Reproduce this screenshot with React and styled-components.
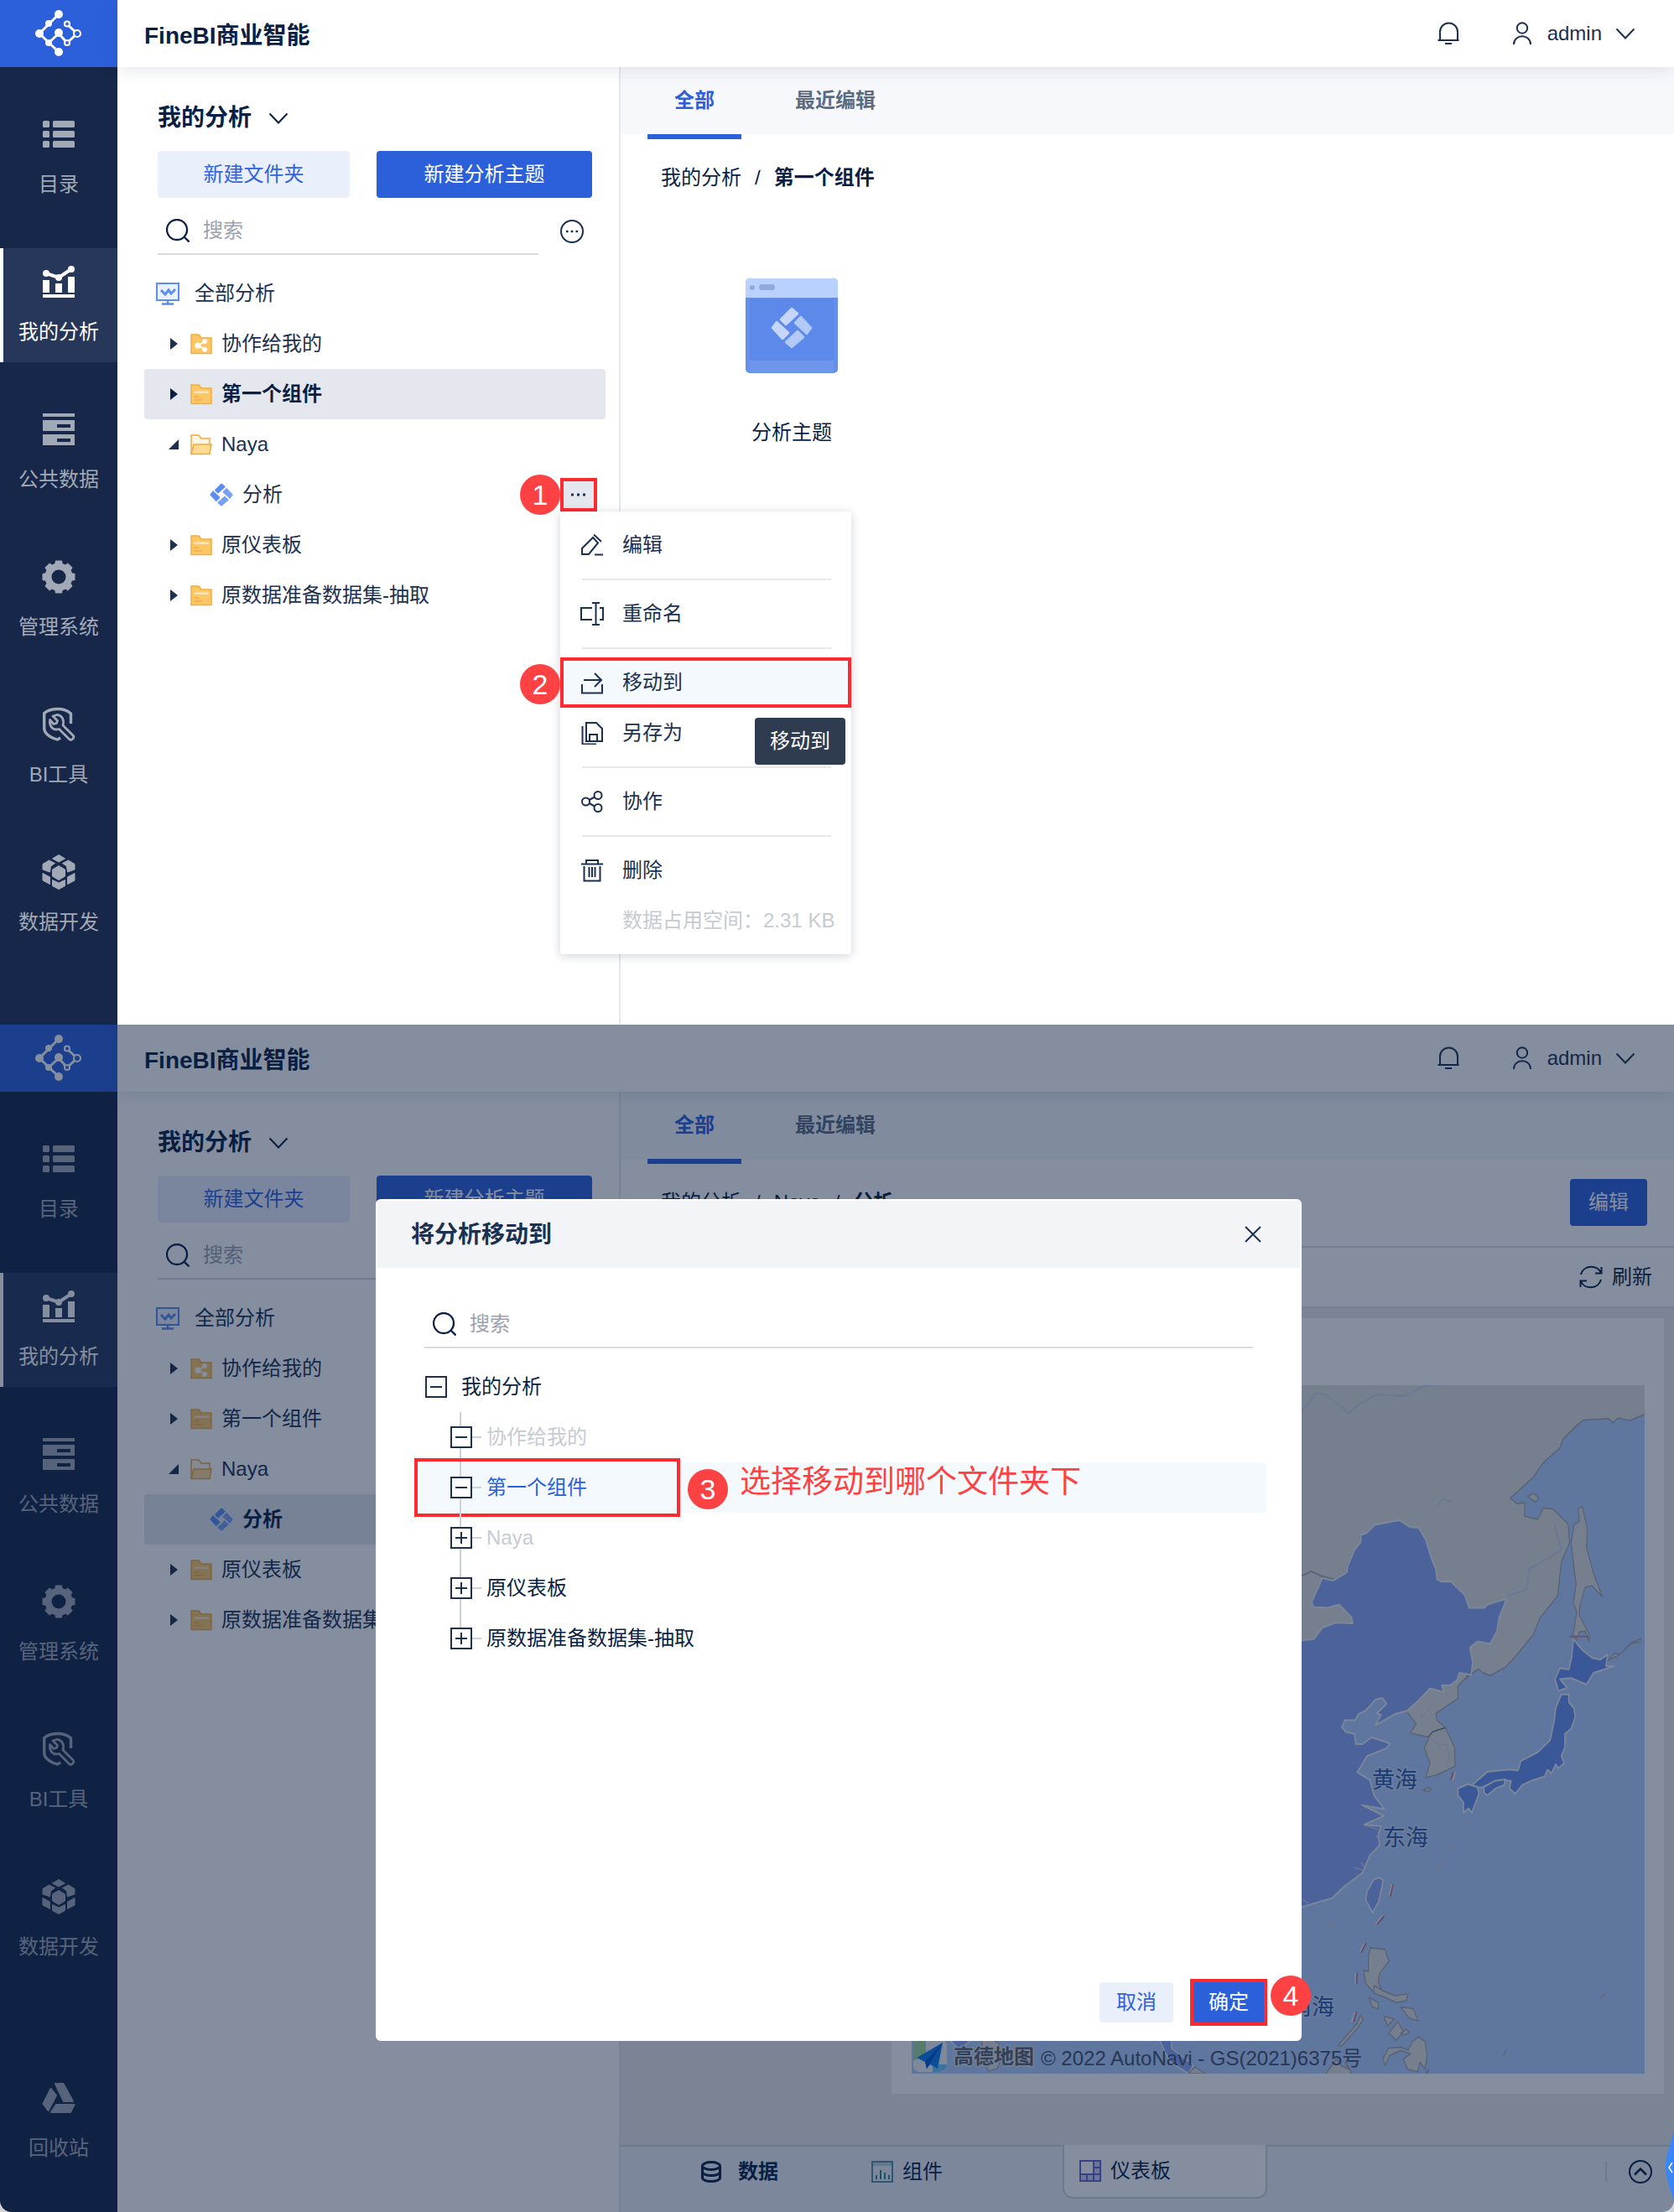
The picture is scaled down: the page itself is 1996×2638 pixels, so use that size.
import React from 'react';
import styled, { createGlobalStyle, css } from 'styled-components';

const GlobalStyle = createGlobalStyle`
    *, *::before, *::after {
        box-sizing: border-box;
    }
    body {
        margin: 0;
        background: #d3d3d3;
        color: #1c3050;
        font-family: 'Liberation Sans', 'Noto Sans CJK SC', sans-serif;
        font-size: 24px;
        line-height: 36px;
    }
    button, input {
        font: inherit;
        color: inherit;
        border: none;
        background: none;
        padding: 0;
        margin: 0;
    }
    a {
        color: inherit;
        text-decoration: none;
    }
    ul {
        list-style: none;
        margin: 0;
        padding: 0;
    }
    svg {
        display: block;
        flex-shrink: 0;
    }
`;

/* ---------- shell ---------- */

const Screen = styled.section`
    position: relative;
    display: flex;
    background: #fff;
    overflow: hidden;
    border-radius: ${({ $rounded }) => ($rounded ? '0 0 14px 14px' : '0')};
`;

const Rail = styled.nav`
    display: flex;
    flex-direction: column;
    width: 140px;
    flex-shrink: 0;
    background: #172749;
    padding-bottom: ${({ $end }) => $end}px;
`;

const LogoBox = styled.a`
    display: flex;
    align-items: center;
    justify-content: center;
    height: 80px;
    background: #2c60db;
    color: #fff;
`;

const RailList = styled.ul`
    display: flex;
    flex-direction: column;
    flex: 1;
    gap: 40px;
    padding-top: 40px;
`;

const RailItem = styled.li`
    margin-top: ${({ $last }) => ($last ? '64px' : '0')};
`;

const RailLink = styled.a`
    display: flex;
    flex-direction: column;
    align-items: center;
    gap: 22px;
    height: 136px;
    padding: 20px 4px 0 0;
    border-left: 4px solid ${({ $active }) => ($active ? '#fff' : 'transparent')};
    background: ${({ $active }) => ($active ? '#27375a' : 'transparent')};
    color: ${({ $active }) => ($active ? '#fff' : '#a2a9b6')};
`;

const Column = styled.div`
    display: flex;
    flex-direction: column;
    flex: 1;
    min-width: 0;
`;

const TopBar = styled.header`
    position: relative;
    z-index: 1;
    display: flex;
    align-items: center;
    height: 80px;
    padding: 0 46px 0 32px;
    background: #fff;
    box-shadow: 0 2px 20px rgba(20, 40, 80, 0.13);
`;

const Brand = styled.h1`
    margin: 0 auto 0 0;
    padding-top: 6px;
    font-size: 28px;
    line-height: 40px;
    font-weight: 700;
    color: #0a1f44;
`;

const IconButton = styled.button`
    display: flex;
    align-items: center;
    gap: ${({ $gap }) => $gap || 0}px;
    margin-right: ${({ $end }) => $end || 0}px;
    cursor: pointer;
`;

const Body = styled.div`
    display: flex;
    flex: 1;
`;

/* ---------- left panel ---------- */

const SidePanel = styled.aside`
    display: flex;
    flex-direction: column;
    width: 600px;
    flex-shrink: 0;
    padding: 40px 16px 40px 32px;
    border-right: 2px solid #e4e7ee;
`;

const PanelTitle = styled.button`
    display: flex;
    align-items: center;
    gap: 20px;
    height: 40px;
    margin-left: 16px;
    padding-top: 2px;
    font-size: 28px;
    font-weight: 700;
    color: #0a1f44;
`;

const ButtonRow = styled.div`
    display: grid;
    grid-template-columns: 229fr 257fr;
    gap: 32px;
    margin: 20px 16px 0;
`;

const Button = styled.button`
    height: ${({ $small }) => ($small ? 48 : 56)}px;
    padding: 0 ${({ $small }) => ($small ? 20 : 22)}px;
    border-radius: 4px;
    cursor: pointer;
    background: #e9effb;
    color: #3262dc;
    ${({ $primary }) => $primary && css`
        background: #2c60db;
        color: #fff;
    `}
`;

const SearchRow = styled.div`
    display: flex;
    align-items: center;
    gap: 26px;
    height: 80px;
    margin: 0 26px 0 16px;
`;

const SearchBox = styled.label`
    display: flex;
    align-items: center;
    gap: 16px;
    flex: 1;
    height: 56px;
    padding-left: 10px;
    border-bottom: 2px solid #d8dbe3;
    color: #0a1f44;
`;

const SearchInput = styled.input`
    flex: 1;
    min-width: 0;
    outline: none;
    &::placeholder {
        color: #9aa2b0;
        opacity: 1;
    }
`;

const TreeRow = styled.li`
    position: relative;
    display: flex;
    align-items: center;
    height: 60px;
    padding: 0 10px 0 ${({ $level }) => [14, 28, 78][$level]}px;
    border-radius: 4px;
    background: ${({ $selected }) => ($selected ? '#e5e7ee' : 'transparent')};
    font-weight: ${({ $selected }) => ($selected ? 700 : 400)};
    color: ${({ $selected }) => ($selected ? '#0a1f44' : '#1c3050')};
`;

const TreeList = styled.ul`
    margin-top: 4px;
`;

const TreeLabel = styled.a`
    display: flex;
    align-items: center;
    gap: ${({ $wide }) => ($wide ? 18 : 11)}px;
    white-space: nowrap;
`;

const Caret = styled.svg`
    margin-right: 13px;
`;

/* ---------- row menu ---------- */

const MoreWrap = styled.div`
    position: relative;
    z-index: 5;
    width: 44px;
    height: 40px;
    margin-left: auto;
    font-weight: 400;
`;

const MoreButton = styled.button`
    display: flex;
    align-items: center;
    justify-content: center;
    width: 44px;
    height: 40px;
    border: 4px solid #fd2a2f;
    background: #e5e7ee;
`;

const Badge = styled.span`
    position: absolute;
    z-index: 6;
    left: ${({ $left }) => $left}px;
    top: ${({ $top }) => $top}px;
    width: 48px;
    height: 48px;
    border-radius: 50%;
    background: #fe4143;
    color: #fff;
    font-size: 34px;
    font-weight: 400;
    line-height: 48px;
    text-align: center;
`;

const Menu = styled.ul`
    position: absolute;
    top: 100%;
    left: 0;
    width: 347px;
    padding: 10px 0;
    background: #fff;
    border-radius: 4px;
    box-shadow: 0 2px 12px rgba(10, 31, 68, 0.2);
`;

const MenuItem = styled.li`
    position: relative;
`;

const MenuButton = styled.button`
    display: flex;
    align-items: center;
    gap: 22px;
    width: 100%;
    height: 60px;
    padding-left: ${({ $marked }) => ($marked ? 20 : 24)}px;
    border: ${({ $marked }) => ($marked ? '4px solid #fd2a2f' : 'none')};
    background: ${({ $marked }) => ($marked ? '#f4f9fe' : 'transparent')};
    cursor: pointer;
`;

const MenuLine = styled.li`
    height: 2px;
    margin: 10px 24px 10px 26px;
    background: #e5e8f0;
`;

const MenuNote = styled.li`
    height: 60px;
    padding-left: 74px;
    line-height: 60px;
    white-space: nowrap;
    color: #c6cbd3;
`;

const Tooltip = styled.span`
    position: absolute;
    z-index: 3;
    right: 7px;
    top: 72px;
    padding: 10px 18px;
    border-radius: 4px;
    background: #2f3c50;
    color: #fff;
`;

/* ---------- main pane ---------- */

const Main = styled.main`
    display: flex;
    flex-direction: column;
    flex: 1;
    min-width: 0;
`;

const Tabs = styled.div`
    display: flex;
    gap: 32px;
    height: 80px;
    padding-left: 32px;
    background: #f7f8fc;
`;

const Tab = styled.button`
    height: 86px;
    padding: 0 32px;
    border-bottom: 6px solid ${({ $active }) => ($active ? '#2c60db' : 'transparent')};
    color: ${({ $active }) => ($active ? '#2c60db' : '#5c6b80')};
    font-weight: 700;
`;

const CrumbBar = styled.div`
    display: flex;
    align-items: center;
    justify-content: space-between;
    height: ${({ $line }) => ($line ? 106 : 104)}px;
    padding: 0 32px 0 48px;
    border-bottom: ${({ $line }) => ($line ? '2px solid #dcdfe6' : 'none')};
    color: #0a1f44;
`;

const Crumbs = styled.div`
    display: flex;
    gap: 16px;
`;

const FileCard = styled.a`
    display: flex;
    flex-direction: column;
    align-items: center;
    gap: 52px;
    width: 208px;
    margin: 68px 0 0 100px;
    color: #0a1f44;
`;

const RefreshBar = styled.div`
    display: flex;
    justify-content: flex-end;
    height: 72px;
    padding-right: 26px;
    border-bottom: 2px solid #dcdfe6;
    color: #0a1f44;
`;

const Canvas = styled.div`
    flex: 1;
    padding: 12px 12px 61px;
    background: #ebebea;
`;

const MapCard = styled.div`
    width: 921px;
    max-width: 100%;
    margin-left: auto;
    padding: 80px 23px 24px 24px;
    background: #fff;
`;

const MapSvg = styled.svg`
    width: 100%;
    height: auto;
`;

const SheetBar = styled.div`
    display: flex;
    align-items: flex-start;
    height: 80px;
    border-top: 2px solid #cfd4de;
    background: #eef0f6;
    color: #0a1f44;
`;

const SheetTab = styled.button`
    display: flex;
    align-items: center;
    gap: 11px;
    width: 246px;
    height: 60px;
    padding-left: 18px;
    ${({ $first }) => $first && css`
        width: 281px;
        gap: 20px;
        padding-left: 96px;
        font-weight: 700;
    `}
    ${({ $active }) => $active && css`
        width: 244px;
        height: 64px;
        margin-top: -2px;
        border: 2px solid #cfd4de;
        border-top: none;
        border-radius: 0 0 12px 12px;
        background: #fff;
    `}
`;

const SheetEnd = styled.div`
    display: flex;
    align-items: center;
    height: 24px;
    margin: 18px 26px 0 auto;
    padding-left: 26px;
    border-left: 2px solid #cfd4de;
`;

/* ---------- dialog ---------- */

const Shade = styled.div`
    position: absolute;
    inset: 0;
    z-index: 10;
    display: flex;
    align-items: center;
    justify-content: center;
    padding: 4px 0 0 4px;
    background: rgba(10, 30, 64, 0.5);
`;

const Dialog = styled.div`
    display: flex;
    flex-direction: column;
    width: 1104px;
    min-height: 1004px;
    border: 2px solid #fff;
    border-radius: 6px;
    background: #fff;
`;

const DialogHead = styled.div`
    display: flex;
    align-items: center;
    justify-content: space-between;
    height: 80px;
    padding: 0 46px 0 40px;
    background: #f2f4f8;
`;

const DialogTitle = styled.h2`
    margin: 0;
    padding-top: 2px;
    font-size: 28px;
    font-weight: 700;
`;

const DialogSearch = styled.div`
    display: flex;
    margin: 40px 56px 16px;
`;

const MoveTree = styled.ul`
    flex: 1;
    margin: 0 40px 0 44px;
`;

const MoveRow = styled.li`
    position: relative;
    display: flex;
    align-items: center;
    height: 60px;
    padding-left: ${({ $root }) => ($root ? 13 : 43)}px;
    border-radius: 4px;
    background: ${({ $picked }) => ($picked ? '#f4f9fe' : 'transparent')};
    color: ${({ $picked, $muted }) => ($picked ? '#2c60db' : $muted ? '#c6cbd3' : '#0a1f44')};
    ${({ $root }) => !$root && css`
        &::before {
            content: '';
            position: absolute;
            left: 54px;
            top: 0;
            height: 60px;
            border-left: 2px solid #cdd1da;
        }
        &:last-child::before {
            height: 30px;
        }
    `}
`;

const Toggle = styled.button`
    position: relative;
    display: flex;
`;

const Hook = styled.span`
    width: ${({ $root }) => ($root ? 17 : 11)}px;
    height: 2px;
    margin-right: ${({ $root }) => ($root ? 0 : 6)}px;
    background: ${({ $root }) => ($root ? 'transparent' : '#cdd1da')};
`;

const Frame = styled.span`
    position: absolute;
    left: 0;
    top: -5px;
    width: 317px;
    height: 70px;
    border: 4px solid #fd2a2f;
    pointer-events: none;
`;

const Remark = styled.span`
    position: absolute;
    left: 388px;
    top: 0;
    font-size: 37px;
    line-height: 48px;
    color: #fe4143;
    white-space: nowrap;
    text-shadow: 0 0 4px #fff, 0 0 4px #fff;
`;

const DialogFoot = styled.div`
    display: flex;
    align-items: center;
    justify-content: flex-end;
    gap: 20px;
    padding: 0 39px 16px;
`;

const ConfirmWrap = styled.div`
    position: relative;
    display: flex;
    border: 4px solid #fd2a2f;
`;

const ConfirmButton = styled(Button)`
    padding: 0 18px;
    border-radius: 0;
`;

const SideHandle = styled.button`
    position: absolute;
    z-index: 11;
    right: 0;
    bottom: 10px;
    width: 10px;
    height: 90px;
`;

/* ---------- icons ---------- */

const Logo = () => (
    <svg width="60" height="60" viewBox="40 10 60 60" fill="currentColor" stroke="currentColor">
        <g fill="none" strokeWidth="3">
            <path d="M70 17 47 40l23 22M70 40 58 51M70 40l10 11M80 29l12 11-12 11" />
        </g>
        <g stroke="none">
            <circle cx="70" cy="17" r="5" />
            <circle cx="47" cy="40" r="5" />
            <circle cx="70" cy="62" r="5" />
            <circle cx="70" cy="39" r="5" />
            <circle cx="58" cy="28" r="4" />
            <circle cx="58" cy="51" r="4" />
        </g>
        <g fill="#2c60db" strokeWidth="2.2">
            <circle cx="80" cy="28.5" r="3" />
            <circle cx="92" cy="40" r="4" />
            <circle cx="80" cy="51" r="3" />
        </g>
    </svg>
);

const railIcons = {
    list: (
        <g>
            {[4, 16, 28].map((y) => (
                <g key={y}>
                    <rect x="1" y={y} width="8" height="8" rx="1.5" />
                    <rect x="13" y={y} width="26" height="8" rx="1.5" />
                </g>
            ))}
        </g>
    ),
    chart: (
        <g>
            <path d="M1 18h8v15H1zM16 22h8v11h-8zM31 14h8v19h-8zM1 35h38v4H1z" />
            <path d="M5 10l15 5L35 5" fill="none" stroke="currentColor" strokeWidth="4" />
            <circle cx="5" cy="10" r="4" />
            <circle cx="20" cy="15" r="4" />
            <circle cx="35" cy="5" r="4" />
        </g>
    ),
    data: <path fillRule="evenodd" d="M1 1h38v4H1zM1 9h38v13H1zM18 14v4h16v-4zM1 26h38v13H1zM18 31v4h16v-4z" />,
    gear: (
        <g>
            <circle cx="20" cy="20" r="12.5" fill="none" stroke="currentColor" strokeWidth="8" />
            {[0, 45, 90, 135, 180, 225, 270, 315].map((a) => (
                <path key={a} d="M15 6l1-5.500h8l1 5.500z" transform={`rotate(${a} 20 20)`} />
            ))}
        </g>
    ),
    tool: (
        <g fill="none" stroke="currentColor" strokeWidth="3.4" strokeLinejoin="round">
            <path d="M34.500 19V7C30 3 25 1.500 19 1.500S7 3 2.700 6.500V24c0 6 6 11 15.500 14l4-2" />
            <path d="M13 10l5.500 5.500-1 3-3.500 1-4.500-5c-1 6 2 11 7 11.500 2 0 3 0 4-.6L33 38c2 1.500 6-2 4.500-4.500L25 21c2-6-1-12-7-12.500z" strokeWidth="2.800" />
        </g>
    ),
    cube: (
        <g stroke="currentColor" strokeWidth="1" strokeLinejoin="round">
            <path d="M20-.5l7.500 4.500-7.500 4-7.500-4zM20 12.500l7.500 4.500v8l-7.500 4.500-7.500-4.500v-8zM20 33l7.500-3.500v7l-7.500 4-7.500-4v-7z" />
            <path d="M1 10.500l7.500-4.500 7 3.500-5 3.500-1 7-8.500-3zM1 21.500l8.500 4.500v8.500l-8.500-4.500zM39 10.500l-7.500-4.500-7 3.500 5 3.500 1 7 8.500-3zM39 21.500l-8.500 4.500v8.500l8.500-4.500z" />
        </g>
    ),
    recycle: (
        <path
            stroke="currentColor"
            strokeWidth="2"
            strokeLinejoin="round"
            d="M16 3h9.500l11.500 21H26zM10.500 9l6.500 8L7.500 35 1.500 27zM17 28h21.500L34 37H11z"
        />
    ),
};

const RailIcon = ({ name }) => (
    <svg width="40" height="40" viewBox="0 0 40 40" fill="currentColor" overflow="visible">
        {railIcons[name]}
    </svg>
);

// Thin outline icons share one wrapper
const Line = ({ size = 28, d, width = 2, children }) => (
    <svg width={size} height={size} viewBox="0 0 28 28" fill="none" stroke="currentColor" strokeWidth={width}>
        {d && <path d={d} />}
        {children}
    </svg>
);

const Chevron = () => (
    <svg width="24" height="24" viewBox="0 0 24 24" fill="none" stroke="currentColor" strokeWidth="2">
        <path d="M1.500 6.500L12 17.500 22.500 6.500" />
    </svg>
);

const SearchIcon = () => (
    <Line>
        <circle cx="13" cy="13" r="12" strokeWidth="2.300" />
        <path d="M21.500 21.500l6 6" strokeWidth="2.300" />
    </Line>
);

const folderColors = { fill: '#fdc766', stroke: '#f0ae45' };

const Folder = ({ kind }) => (
    <svg width="26" height="26" viewBox="0 0 26 26" strokeWidth="1.500">
        {kind === 'open' ? (
            <g stroke="#efa93c">
                <path d="M1 24V2h9l3 4h10v18z" fill="#fff6e2" />
                <path d="M4 13h21l-2 11.500H1z" fill="#ffdb94" />
            </g>
        ) : (
            <path d="M1 24.500V2h9l3 4h12v18.500z" {...folderColors} />
        )}
        {kind === 'plain' && (
            <g fill="none">
                <path d="M4 12c0-2 1-2.500 3-2.500h12c2 0 3 .5 3 2.500z" fill="#ffe7b5" />
                <path d="M4 16h6M4 20h10" stroke="#f0ae45" />
            </g>
        )}
        {kind === 'share' && (
            <g fill="#fff" stroke="#fff">
                <path d="M17 10.500L9 15l8 4.500" fill="none" />
                <circle cx="17" cy="10" r="2.200" />
                <circle cx="9" cy="15" r="2.800" />
                <circle cx="17" cy="20" r="2.200" />
            </g>
        )}
    </svg>
);

const Pinwheel = ({ size, from, to }) => (
    <svg width={size} height={size} viewBox="0 0 50 50" strokeWidth="2.500" strokeLinejoin="round">
        <path d="M25 2l7 6-14 13-6-6zM7 18l14 13-7 7L2 25z" fill={from} stroke={from} />
        <path d="M36 12l12 13-5 7-14-13zM32 29l7 7-14 12-7-6z" fill={to} stroke={to} />
    </svg>
);

const Monitor = () => (
    <svg width="28" height="28" viewBox="0 0 28 28" fill="none" stroke="#5c8df0" strokeWidth="2">
        <path d="M1 2h26v20H1z" fill="#eaf1fe" />
        <path d="M6 10l5 5 4-5 3 4 5-5" strokeWidth="3" />
        <path d="M14 22v4M7 26.500h14" strokeWidth="2.500" />
    </svg>
);

const menuIcons = {
    edit: <Line d="M2 25V18L15 5l6 6.500L10 25zM16 1.500l9 8.500M17 25.500h10" />,
    rename: <Line d="M14 7H1v14h13M23 7h4v14h-4M18.500 1v26M14 1h9M14 27h9" />,
    move: <Line d="M2 16v10.500h24V16M4 11h21M17 3l8 8-8 8" />,
    saveAs: <Line d="M7 2h12l7 7v15H7zM11 24v-8h9v8M2.500 6v21.500H19" />,
    share: (
        <Line>
            <circle cx="6.500" cy="14" r="4.500" />
            <circle cx="21" cy="6.500" r="4.500" />
            <circle cx="21" cy="21.500" r="4.500" />
            <path d="M10.500 12L17 8.500M10.500 16l6.500 3.500" />
        </Line>
    ),
    trash: <Line d="M1 6.500h26M7 6V2h14v4M4.500 9v17.500h19V9M10.500 10v12M14 10v12M17.500 10v12" />,
};

const ThemeFile = () => (
    <svg width="110" height="114" viewBox="0 0 110 114">
        <rect width="110" height="113" rx="5" fill="#6490ec" />
        <path d="M5 24h100v74H5z" fill="#5d8aea" />
        <path d="M5 98h100v14H5z" fill="#6e97ec" />
        <path d="M0 23V5a5 5 0 0 1 5-5h100a5 5 0 0 1 5 5v18z" fill="#b9d1fe" />
        <circle cx="8" cy="11" r="3" fill="#8faadf" />
        <rect x="16" y="7" width="19" height="7" rx="3.500" fill="#8faadf" />
        <g transform="translate(30 34)" strokeWidth="2.500" strokeLinejoin="round">
            <path d="M25 2l7 6-14 13-6-6zM7 18l14 13-7 7L2 25z" fill="#c6d6fb" stroke="#c6d6fb" />
            <path d="M36 12l12 13-5 7-14-13zM32 29l7 7-14 12-7-6z" fill="#b3c9f8" stroke="#b3c9f8" />
        </g>
    </svg>
);

/* ---------- data ---------- */

const railItems = [
    { label: '目录', icon: 'list' },
    { label: '我的分析', icon: 'chart' },
    { label: '公共数据', icon: 'data' },
    { label: '管理系统', icon: 'gear' },
    { label: 'BI工具', icon: 'tool' },
    { label: '数据开发', icon: 'cube' },
];

const treeItems = [
    { label: '协作给我的', kind: 'share' },
    { label: '第一个组件', kind: 'plain' },
    { label: 'Naya', kind: 'open' },
    { label: '分析', kind: 'theme' },
    { label: '原仪表板', kind: 'plain' },
    { label: '原数据准备数据集-抽取', kind: 'plain' },
];

const moveItems = [
    { label: '我的分析', root: true, open: true },
    { label: '协作给我的', open: true, muted: true },
    { label: '第一个组件', open: true, picked: true },
    { label: 'Naya', muted: true },
    { label: '原仪表板' },
    { label: '原数据准备数据集-抽取' },
];

/* ---------- parts ---------- */

const SideNav = ({ items, end }) => (
    <Rail $end={end}>
        <LogoBox href="#" aria-label="FineBI">
            <Logo />
        </LogoBox>
        <RailList>
            {items.map((item) => (
                <RailItem key={item.label} $last={item.icon === 'recycle'}>
                    <RailLink href="#" $active={item.icon === 'chart'}>
                        <RailIcon name={item.icon} />
                        {item.label}
                    </RailLink>
                </RailItem>
            ))}
        </RailList>
    </Rail>
);

const Header = () => (
    <TopBar>
        <Brand>FineBI商业智能</Brand>
        <IconButton aria-label="消息" $end={60}>
            <Line d="M4 22V12a10 10 0 0 1 21 0v10M1.500 22h25M10 26h8" />
        </IconButton>
        <IconButton $gap={16}>
            <Line>
                <circle cx="14" cy="7.500" r="6.200" />
                <path d="M4 27c0-13 20-13 20 0" />
            </Line>
            admin
            <Chevron />
        </IconButton>
    </TopBar>
);

const RowMenu = () => (
    <MoreWrap>
        <Badge $left={-48} $top={-4}>1</Badge>
        <MoreButton aria-label="更多">
            <svg width="20" height="4" viewBox="0 0 20 4" fill="#1c3050">
                <path d="M1 .5h3v3H1zM8 .5h3v3H8zM15 .5h3v3h-3z" />
            </svg>
        </MoreButton>
        <Menu>
            <MenuItem><MenuButton>{menuIcons.edit}编辑</MenuButton></MenuItem>
            <MenuLine />
            <MenuItem><MenuButton>{menuIcons.rename}重命名</MenuButton></MenuItem>
            <MenuLine />
            <MenuItem>
                <Badge $left={-48} $top={8}>2</Badge>
                <MenuButton $marked>{menuIcons.move}移动到</MenuButton>
                <Tooltip>移动到</Tooltip>
            </MenuItem>
            <MenuItem><MenuButton>{menuIcons.saveAs}另存为</MenuButton></MenuItem>
            <MenuLine />
            <MenuItem><MenuButton>{menuIcons.share}协作</MenuButton></MenuItem>
            <MenuLine />
            <MenuItem><MenuButton>{menuIcons.trash}删除</MenuButton></MenuItem>
            <MenuNote>数据占用空间：2.31 KB</MenuNote>
        </Menu>
    </MoreWrap>
);

const Search = ({ id }) => (
    <SearchBox htmlFor={id}>
        <SearchIcon />
        <SearchInput id={id} type="text" placeholder="搜索" aria-label="搜索" />
    </SearchBox>
);

const Explorer = ({ id, selected, menu }) => (
    <SidePanel>
        <PanelTitle>
            我的分析
            <Chevron />
        </PanelTitle>
        <ButtonRow>
            <Button>新建文件夹</Button>
            <Button $primary>新建分析主题</Button>
        </ButtonRow>
        <SearchRow>
            <Search id={`${id}-search`} />
            <IconButton aria-label="更多操作">
                <Line>
                    <circle cx="14" cy="14" r="13" />
                    <path d="M7 14h2.500M12.700 14h2.600M18.500 14H21" strokeWidth="2.500" />
                </Line>
            </IconButton>
        </SearchRow>
        <TreeList>
            <TreeRow $level={0}>
                <TreeLabel href="#" $wide>
                    <Monitor />
                    全部分析
                </TreeLabel>
            </TreeRow>
            {treeItems.map(({ label, kind }) => (
                <TreeRow key={label} $level={kind === 'theme' ? 2 : 1} $selected={label === selected}>
                    {kind !== 'theme' && (
                        <Caret width="14" height="14" viewBox="0 0 14 14" fill="currentColor">
                            <path d={kind === 'open' ? 'M13 1v12H1z' : 'M3 0l9 7-9 7z'} />
                        </Caret>
                    )}
                    <TreeLabel href="#">
                        {kind === 'theme' ? <Pinwheel size={28} from="#5c8df2" to="#7aa0f5" /> : <Folder kind={kind} />}
                        {label}
                    </TreeLabel>
                    {menu && kind === 'theme' && <RowMenu />}
                </TreeRow>
            ))}
        </TreeList>
    </SidePanel>
);

const MainTabs = () => (
    <Tabs>
        <Tab $active>全部</Tab>
        <Tab>最近编辑</Tab>
    </Tabs>
);

const coast = '#c5cad3';
const land = '#e2e0dc';

const ChinaMap = () => (
    <MapSvg viewBox="1087 1652 874 821" role="img" aria-label="地图">
        <rect x="1087" y="1652" width="874" height="821" fill="#b4ceff" />
        <g transform="translate(1500 1880) scale(.33333 .40816)" strokeLinejoin="round">
            <g fill={land} stroke="#a9a9ae" strokeWidth="4">
                <path d="M-1260-580H1400V-477l-17 3-53 19-42-8-18 14-15-12-90 4-25 16-50 41-10 25-60 43-35 42-83 62 23 15 30-2-2 39 47 9 22-33 33 3 55 44 5 54-30 57-13 99-62 63-25 50-65 65-35 30-55 25-30-10-10-10-45 25-30 25v37l-78 43 3 20 30 22 33 58 2 55-65 25-40 8 15-43-20-45 17-30-67-12 20-28-33-35-132-95H-1260z" />
                <path d="M965-232l20-12 20 15-12 12z" />
                <path d="M1160-203l18 63-3 55 25 76 32 69-37-33-25 5-20 58v25l20 30 17 30-4 15-13-30-20 2-13 28-10-20 13-65-12-30 10-50-18-121 10-55 20-11-5-37z" />
                <path d="M402 1085l53 5 13 35-33 35-5 25 15 30-35-3-25-22-7-40 17 5v-45z" />
                <path d="M415 1195l30 15 45 15 45-5-5 20-35 5-40-15-40-12zM397 1230l33 15v20l-22-8zM450 1285l38 8-25 20zM468 1335l32-35 20 30-25 25zM510 1258l45 5 18 36-33-9zM510 1335l20-12 12 10-22 8z" />
                <path d="M575 1345l23 15 7 40-7 40-18-20-10 28-35-8-15-30 25-15-35-10-40 15-15 30-8-20 20-32 45-2 25 8 15-24z" />
                <path d="M285 1372l70-66 12-25 8 15-20 25-55 50zM240 1456l40-45 20 20 30 10 5 15zM590 624l20-8 10 6-15 6z" />
                <path d="M1250 247l25-22 20 2 40-33 35-12-3 8-35 8-42 32z" />
                <path d="M876 1400l12-16-6 14zM1222 1232l18-12-6 10z" strokeWidth="2" />
            </g>
            <g fill="none" stroke="#c9d2e8" strokeWidth="5">
                <path d="M156-481l49-53h30l50 30 40 27 40-28 60-26 100 4 75-31 65-3" />
                <path d="M890 58l70-20 10-60 55-25 60-30-25-75M640-205l20-20 30 5" />
                <path d="M620 380l-40 35M620 475l30 20 25-5 10 40-10 20" strokeWidth="3" />
            </g>
            <path d="M610 468l15-14 45-12" fill="none" stroke="#7d8086" strokeWidth="4" />
            <path d="M140 5l50-20 40 15 40 8" fill="none" stroke="#b0a8ac" strokeWidth="5" />
            <g fill="#8ca8f4" stroke="#eef0f4" strokeWidth="5">
                <path d="M388-126l30-25 87-13 40 20 30 2 25 35 18 49 19 40 3 26 15 7h35l50 40 15 37h53l14-10 68-17-28 55-7 40-25 37-45-7-27 18 10 42-6 38-42-6-8 20-24 16h-31l8 20-50-11-40 35-43 31-42 9-70 33 20-30-15-5 35-28-15-17-25 5-35 32-25 10-12 18h-38l-10 20 15 15 30 5 5 30h25l30-20 67 18-12 14-70 23-35 47 45 23 15 45 37 40-80-12 78 32-70 25 60 5-10 25 5 30-35 30-25 50-65 40-45 35-105 25-300 30V212h260l35-25 45-4 30-33 50-15 58 2-3-17-45-38-40 10-50-2-8-15 38-70 40 7 48-24 2-16 25-49 23-24v-20z" />
                <path d="M435 880l13 8-16 62-22 32-25-37 5-25 25-35z" />
            </g>
            <g fill="none" stroke="#e0e3ea" strokeWidth="2.500">
                <path d="M430 740l-50-14M452 700l-60-32M435 770l-15-14M378 860l-32-10M370 835l12 20M310 905l15 8M180 955l-20-12" />
            </g>
            <g fill="#6a92f0" stroke="#eef0f4" strokeWidth="5">
                <path d="M1128 183l32 32 35 23 30 5 25-15-5 34 30 0-75 20-25 34-55-19-40 3 25 25-30 10-13-35 18-32 32 4 10-37z" />
                <path d="M1085 345h27v23l18 17 5 25-15 35-22 15v40l-13 25 10 20-20 16-10-12-15 26-15-10-10 20-50 13-30 12-25 25-20-15 5-22-35-3-70 22h-45l65-46 80-7 30 3 10-28 60-25 45-35 15-60 5-35z" />
                <path d="M808 615l37-17 40-5-5 17-30 10-30 20-12-8zM715 620l35-13 35 8 5 20-25 55-12-12-18 12v-30l-20-20z" />
            </g>
            <g fill={coast}>
                <path d="M1092 175l18 22-12-2zM1005 455l12-6-2 14-12 6zM955 490l20-10-12 16zM830 520l10 2-6 10zM685 800l32-25-10 15-20 14zM640 857l15-25 12-4-12 20zM505 908l25-2-10 6zM560 893l10 4-8 2zM245 1008l35 12-15 2zM735 720l25-10-15 14zM500 865l10-5-6 8zM190 1305l25-15-12 14zM155 1395l45-22-15 24zM230 1330l20-10-10 14zM675 645l30-20-15 20z" />
            </g>
            <g stroke="#f3f3f6" strokeWidth="5">
                <path d="M479 900l-10 35M446 990l-25 26M381 1072l-16 26M349 1158v32M347 1273l-14 30M706 572l-10 24" />
            </g>
            <g stroke="#d25a68" strokeWidth="4">
                <path d="M483 900l-10 36M451 992l-25 25M386 1072l-17 27M354 1158l-1 33M352 1273l-9 28M698 572l-8 22" />
            </g>
            <path d="M1115 176h68M745 300l5-12M312 1418l16 24M600 1453l12-11" stroke="#c58c9c" strokeWidth="5" />
        </g>
        <g strokeWidth="1.500">
            <path d="M1171 2425l20 12 3 18-5 12-10 3-8-14z" fill={land} stroke="#a9a9ae" />
            <path d="M1379 2425h18v18l26 20-6 10-22-14zM1130 2430l13 14 14-10z" fill="#8ca8f4" stroke="#eef0f4" />
            <path d="M1417 2473l8-8 12 8z" fill={land} stroke="#a9a9ae" />
        </g>
        <g fontSize="27" fill="#2c5aa8" stroke="#cfdcf6" strokeWidth="3" paintOrder="stroke">
            <text x="1636" y="2132">黄海</text>
            <text x="1649" y="2201">东海</text>
            <text x="1537" y="2403">南海</text>
        </g>
        <g>
            <rect x="1089" y="2432" width="40" height="39" rx="8" fill="#f2f5f6" />
            <path d="M1089 2440a8 8 0 0 1 8-8h7v18l-15 8z" fill="#a5db9a" />
            <path d="M1112 2471v-9h17a9 9 0 0 1-9 9z" fill="#72c8f2" />
            <path d="M1124 2436l-31 18 10 5 2 8 4-5 9 5z" fill="#0a7cf0" />
            <path d="M1124 2436l-21 23 2 8z" fill="#0a56c8" />
        </g>
        <text x="1137" y="2461" fontSize="24" fontWeight="700" fill="#5a6270" stroke="#dfe3ea" strokeWidth="3" paintOrder="stroke">
            高德地图
        </text>
        <text x="1241" y="2463" fontSize="24" fill="#44506a">© 2022 AutoNavi - GS(2021)6375号</text>
    </MapSvg>
);

const MoveDialog = () => (
    <Shade>
        <Dialog role="dialog" aria-label="将分析移动到">
            <DialogHead>
                <DialogTitle>将分析移动到</DialogTitle>
                <IconButton aria-label="关闭">
                    <svg width="20" height="20" viewBox="0 0 20 20" fill="none" stroke="currentColor" strokeWidth="2">
                        <path d="M1 1l18 18M19 1L1 19" />
                    </svg>
                </IconButton>
            </DialogHead>
            <DialogSearch>
                <Search id="move-search-target" />
            </DialogSearch>
            <MoveTree>
                {moveItems.map(({ label, root, open, muted, picked }) => (
                    <MoveRow key={label} $root={root} $muted={muted} $picked={picked}>
                        <Toggle aria-label={open ? '收起' : '展开'}>
                            <svg width="26" height="26" viewBox="0 0 26 26" fill="none" stroke="#1c3050" strokeWidth="2">
                                <path d="M1 1h24v24H1z" fill="#fff" />
                                <path d={open ? 'M6 13h14' : 'M6 13h14M13 6v14'} />
                            </svg>
                        </Toggle>
                        <Hook $root={root} />
                        {label}
                        {picked && (
                            <>
                                <Frame />
                                <Badge $left={326} $top={8}>3</Badge>
                                <Remark>选择移动到哪个文件夹下</Remark>
                            </>
                        )}
                    </MoveRow>
                ))}
            </MoveTree>
            <DialogFoot>
                <Button $small>取消</Button>
                <ConfirmWrap>
                    <ConfirmButton $small $primary>确定</ConfirmButton>
                    <Badge $left={92} $top={-8}>4</Badge>
                </ConfirmWrap>
            </DialogFoot>
        </Dialog>
    </Shade>
);

const FolderScreen = () => (
    <Screen>
        <SideNav items={railItems} end={86} />
        <Column>
            <Header />
            <Body>
                <Explorer id="folder" selected="第一个组件" menu />
                <Main>
                    <MainTabs />
                    <CrumbBar>
                        <Crumbs>
                            <a href="#">我的分析</a>
                            <span>/</span>
                            <b>第一个组件</b>
                        </Crumbs>
                    </CrumbBar>
                    <FileCard href="#">
                        <ThemeFile />
                        分析主题
                    </FileCard>
                </Main>
            </Body>
        </Column>
    </Screen>
);

const MoveScreen = () => (
    <Screen $rounded>
        <SideNav items={[...railItems, { label: '回收站', icon: 'recycle' }]} end={40} />
        <Column>
            <Header />
            <Body>
                <Explorer id="move" selected="分析" />
                <Main>
                    <MainTabs />
                    <CrumbBar $line>
                        <Crumbs>
                            <a href="#">我的分析</a>
                            <span>/</span>
                            <a href="#">Naya</a>
                            <span>/</span>
                            <b>分析</b>
                        </Crumbs>
                        <Button $primary>编辑</Button>
                    </CrumbBar>
                    <RefreshBar>
                        <IconButton $gap={11}>
                            <Line d="M2 11C5-1 22-1 26 9M26.500 2v7.500H19M26 17C23 29 6 29 2 19M1.500 26v-7.500H9" />
                            刷新
                        </IconButton>
                    </RefreshBar>
                    <Canvas>
                        <MapCard>
                            <ChinaMap />
                        </MapCard>
                    </Canvas>
                    <SheetBar>
                        <SheetTab $first>
                            <svg width="24" height="26" viewBox="0 0 24 26" fill="none" stroke="currentColor" strokeWidth="3">
                                <ellipse cx="12" cy="6" rx="10.500" ry="4.500" />
                                <path d="M1.500 6v14c0 6 21 6 21 0V6M1.500 13c0 6 21 6 21 0" />
                            </svg>
                            数据
                        </SheetTab>
                        <SheetTab>
                            <svg width="26" height="26" viewBox="0 0 26 26" fill="none" stroke="#5c8f9c" strokeWidth="2">
                                <path d="M1 1h24v24H1z" />
                                <path d="M2 4h22" stroke="#b5d6d8" strokeWidth="4" />
                                <path d="M6 22v-5M11 22V11M16 22v-8M21 22v-5" stroke="#2f8a8a" />
                            </svg>
                            组件
                        </SheetTab>
                        <SheetTab $active>
                            <svg width="26" height="26" viewBox="0 0 26 26" fill="none" stroke="#6464c8" strokeWidth="2">
                                <path d="M1 1h24v24H1z" />
                                <path d="M1 17h24v8H1zM17 1h8v24h-8z" fill="#cfcff4" />
                                <path d="M1 17h24M17 1v24M17 9h8M9 17v8" />
                            </svg>
                            仪表板
                        </SheetTab>
                        <SheetEnd>
                            <IconButton aria-label="收起">
                                <Line>
                                    <circle cx="14" cy="14" r="13" />
                                    <path d="M7 17.500l7-7 7 7" strokeWidth="2.500" />
                                </Line>
                            </IconButton>
                        </SheetEnd>
                    </SheetBar>
                </Main>
            </Body>
        </Column>
        <MoveDialog />
        <SideHandle aria-label="展开侧栏">
            <svg width="10" height="90" viewBox="0 0 10 90">
                <path d="M10 0C8 18 0 28 0 46s8 28 10 44z" fill="#3b86f6" />
                <path d="M8 41l-4 6 4 6" fill="none" stroke="#fff" strokeWidth="1.500" />
            </svg>
        </SideHandle>
    </Screen>
);

const App = () => (
    <>
        <GlobalStyle />
        <FolderScreen />
        <MoveScreen />
    </>
);

export default App;
